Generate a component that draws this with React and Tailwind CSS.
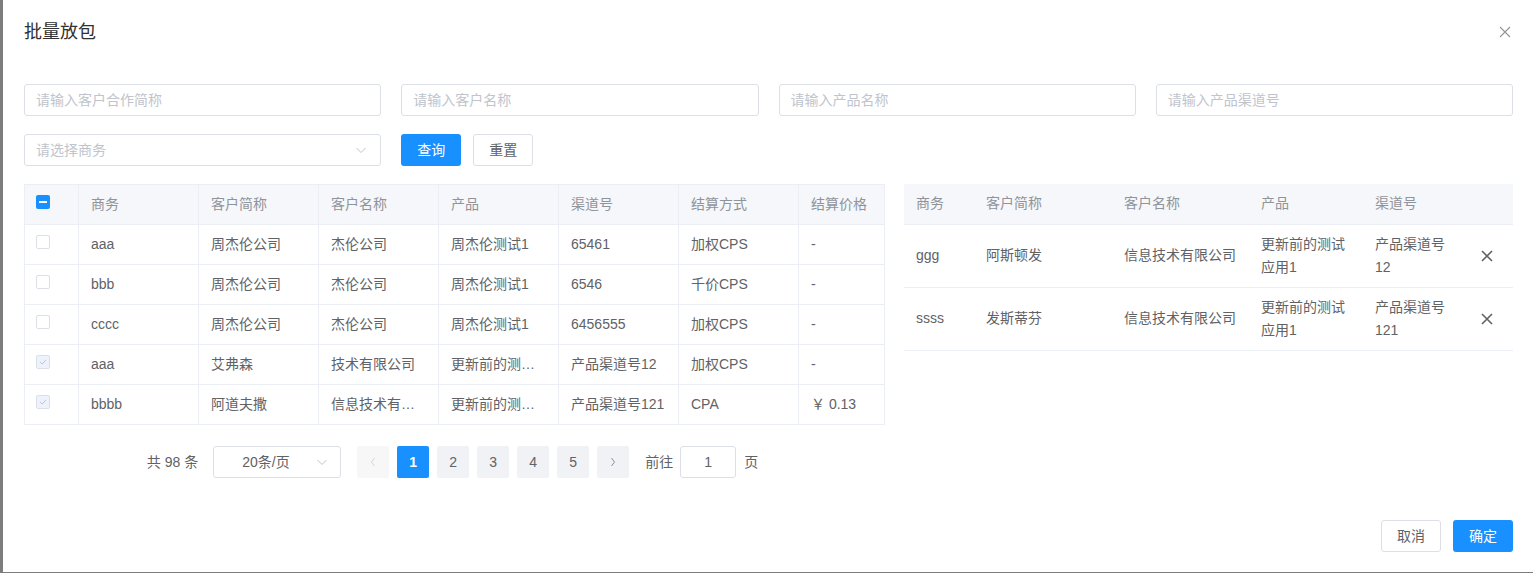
import React from 'react';

const font = { fontFamily: '"Liberation Sans", "Noto Sans CJK SC", sans-serif' };

const leftRows = [
  { checked: false, bd: 'aaa', short: '周杰伦公司', name: '杰伦公司', product: '周杰伦测试1', channel: '65461', settle: '加权CPS', price: '-' },
  { checked: false, bd: 'bbb', short: '周杰伦公司', name: '杰伦公司', product: '周杰伦测试1', channel: '6546', settle: '千价CPS', price: '-' },
  { checked: false, bd: 'cccc', short: '周杰伦公司', name: '杰伦公司', product: '周杰伦测试1', channel: '6456555', settle: '加权CPS', price: '-' },
  { checked: true, bd: 'aaa', short: '艾弗森', name: '技术有限公司', product: '更新前的测…', channel: '产品渠道号12', settle: '加权CPS', price: '-' },
  { checked: true, bd: 'bbbb', short: '阿道夫撒', name: '信息技术有…', product: '更新前的测…', channel: '产品渠道号121', settle: 'CPA', price: '￥ 0.13' },
];

const rightRows = [
  { bd: 'ggg', short: '阿斯顿发', name: '信息技术有限公司', product: '更新前的测试应用1', channel: '产品渠道号12' },
  { bd: 'ssss', short: '发斯蒂芬', name: '信息技术有限公司', product: '更新前的测试应用1', channel: '产品渠道号121' },
];

const Chevron = ({ className }) => (
  <svg className={className} width="12" height="12" viewBox="0 0 12 12" fill="none">
    <path d="M1.5 4 L6 8.5 L10.5 4" stroke="#c0c4cc" strokeWidth="1" />
  </svg>
);

const Checkbox = ({ state }) => {
  if (state === 'indeterminate') {
    return (
      <span className="flex items-center justify-center w-[14px] h-[14px] rounded-[2px] bg-[#1890ff]">
        <span className="w-[8px] h-[2px] bg-white" />
      </span>
    );
  }
  if (state === 'disabled') {
    return (
      <span className="flex items-center justify-center w-[14px] h-[14px] rounded-[2px] border border-[#dcdfe6] bg-[#edf2fc]">
        <svg width="8" height="8" viewBox="0 0 8 8" fill="none">
          <path d="M1 4 L3.2 6 L7 1.8" stroke="#c0c4cc" strokeWidth="1" />
        </svg>
      </span>
    );
  }
  return <span className="block w-[14px] h-[14px] rounded-[2px] border border-[#dcdfe6] bg-white" />;
};

const Input = ({ placeholder, select }) => (
  <div className="flex items-center justify-between h-[32px] px-[11px] border border-[#dcdfe6] rounded-[3px] bg-white">
    <span className="text-[14px] text-[#c0c4cc]">{placeholder}</span>
    {select && <Chevron className="mr-[2px]" />}
  </div>
);

const leftCols = [54, 120, 120, 120, 120, 120, 120, 86];
const rightCols = [70, 138, 137, 114, 108, 42];

const App = () => {
  return (
    <div className="w-[1533px] h-[573px] bg-[#7d7d7d] flex overflow-hidden" style={font}>
      <div className="ml-[3px] w-[1530px] h-[572px] bg-white flex flex-col pl-[21px] pr-[20px]">
        <div className="flex items-center justify-between pt-[20px] h-[44px]">
          <span className="text-[18px] leading-[24px] text-[#303133]">批量放包</span>
          <svg className="mr-[2px]" width="12" height="12" viewBox="0 0 12 12" fill="none">
            <path d="M1 1 L11 11 M11 1 L1 11" stroke="#909399" strokeWidth="1.1" />
          </svg>
        </div>

        <div className="grid grid-cols-4 gap-x-[20px] gap-y-[18px] mt-[40px]">
          <Input placeholder="请输入客户合作简称" />
          <Input placeholder="请输入客户名称" />
          <Input placeholder="请输入产品名称" />
          <Input placeholder="请输入产品渠道号" />
          <Input placeholder="请选择商务" select />
          <div className="col-span-3 flex items-center gap-[12px]">
            <button className="w-[60px] h-[32px] rounded-[3px] bg-[#1890ff] text-white text-[14px]">查询</button>
            <button className="w-[60px] h-[32px] rounded-[3px] border border-[#dcdfe6] bg-white text-[#606266] text-[14px]">重置</button>
          </div>
        </div>

        <div className="flex items-start gap-[20px] mt-[18px]">
          <div className="w-[860px] flex flex-col">
            <table className="table-fixed w-[860px] border-collapse text-[14px] text-[#606266]">
              <colgroup>
                {leftCols.map((w, i) => <col key={i} style={{ width: w }} />)}
              </colgroup>
              <thead>
                <tr className="h-[40px] bg-[#f5f7fa] text-[#909399]">
                  <th className="border border-[#ebeef5] pl-[11px] align-middle">
                    <div className="-mt-[6px]"><Checkbox state="indeterminate" /></div>
                  </th>
                  {['商务', '客户简称', '客户名称', '产品', '渠道号', '结算方式', '结算价格'].map((h) => (
                    <th key={h} className="border border-[#ebeef5] px-[12px] text-left font-normal">{h}</th>
                  ))}
                </tr>
              </thead>
              <tbody>
                {leftRows.map((r, i) => (
                  <tr key={i} className="h-[40px]">
                    <td className="border border-[#ebeef5] pl-[11px]">
                      <div className="-mt-[6px]"><Checkbox state={r.checked ? 'disabled' : 'empty'} /></div>
                    </td>
                    {[r.bd, r.short, r.name, r.product, r.channel, r.settle, r.price].map((v, j) => (
                      <td key={j} className="border border-[#ebeef5] px-[12px] whitespace-nowrap overflow-hidden">{v}</td>
                    ))}
                  </tr>
                ))}
              </tbody>
            </table>

            <div className="flex items-center justify-center mt-[21px] h-[32px] text-[13px] text-[#606266] pr-[3px]">
              <span className="mr-[15px] text-[14px]">共 98 条</span>
              <div className="flex items-center justify-between w-[128px] h-[32px] border border-[#dcdfe6] rounded-[3px] pl-[28px] pr-[12px] mr-[16px]">
                <span className="text-[14px]">20条/页</span>
                <Chevron />
              </div>
              <div className="flex items-center gap-[8px]">
                <span className="flex items-center justify-center w-[32px] h-[32px] rounded-[2px] bg-[#f4f4f5] opacity-70">
                  <svg width="8" height="10" viewBox="0 0 8 10" fill="none"><path d="M5.5 1 L2.5 5 L5.5 9" stroke="#c0c4cc" strokeWidth="1" /></svg>
                </span>
                {[1, 2, 3, 4, 5].map((n) => (
                  <span
                    key={n}
                    className={n === 1
                      ? 'flex items-center justify-center w-[32px] h-[32px] rounded-[2px] bg-[#1890ff] text-white font-bold text-[14px]'
                      : 'flex items-center justify-center w-[32px] h-[32px] rounded-[2px] bg-[#f0f2f5] text-[#606266] text-[14px]'}
                  >
                    {n}
                  </span>
                ))}
                <span className="flex items-center justify-center w-[32px] h-[32px] rounded-[2px] bg-[#f0f2f5]">
                  <svg width="8" height="10" viewBox="0 0 8 10" fill="none"><path d="M2.5 1 L5.5 5 L2.5 9" stroke="#909399" strokeWidth="1" /></svg>
                </span>
              </div>
              <span className="ml-[16px] mr-[7px] text-[14px]">前往</span>
              <div className="flex items-center justify-center w-[56px] h-[32px] border border-[#dcdfe6] rounded-[3px] text-[14px]">1</div>
              <span className="ml-[8px] text-[14px]">页</span>
            </div>
          </div>

          <table className="table-fixed w-[609px] border-collapse text-[14px] text-[#606266]">
            <colgroup>
              {rightCols.map((w, i) => <col key={i} style={{ width: w }} />)}
            </colgroup>
            <thead>
              <tr className="h-[40px] bg-[#f5f7fa] text-[#909399] border-b border-[#ebeef5]">
                {['商务', '客户简称', '客户名称', '产品', '渠道号', ''].map((h, i) => (
                  <th key={i} className="px-[12px] text-left font-normal">{h}</th>
                ))}
              </tr>
            </thead>
            <tbody>
              {rightRows.map((r, i) => (
                <tr key={i} className="h-[63px] border-b border-[#ebeef5] leading-[23px]">
                  <td className="px-[12px]">{r.bd}</td>
                  <td className="px-[12px]">{r.short}</td>
                  <td className="px-[12px]">{r.name}</td>
                  <td className="px-[12px] py-[8px]">{r.product}</td>
                  <td className="px-[12px] py-[8px]">{r.channel}</td>
                  <td className="pl-[9px]">
                    <svg width="14" height="14" viewBox="0 0 14 14" fill="none">
                      <path d="M2 2 L12 12 M12 2 L2 12" stroke="#606266" strokeWidth="1.6" />
                    </svg>
                  </td>
                </tr>
              ))}
            </tbody>
          </table>
        </div>

        <div className="flex justify-end gap-[12px] mt-auto mb-[20px]">
          <button className="w-[60px] h-[32px] rounded-[3px] border border-[#dcdfe6] bg-white text-[#606266] text-[14px]">取消</button>
          <button className="w-[60px] h-[32px] rounded-[3px] bg-[#1890ff] text-white text-[14px]">确定</button>
        </div>
      </div>
    </div>
  );
};

export default App;
